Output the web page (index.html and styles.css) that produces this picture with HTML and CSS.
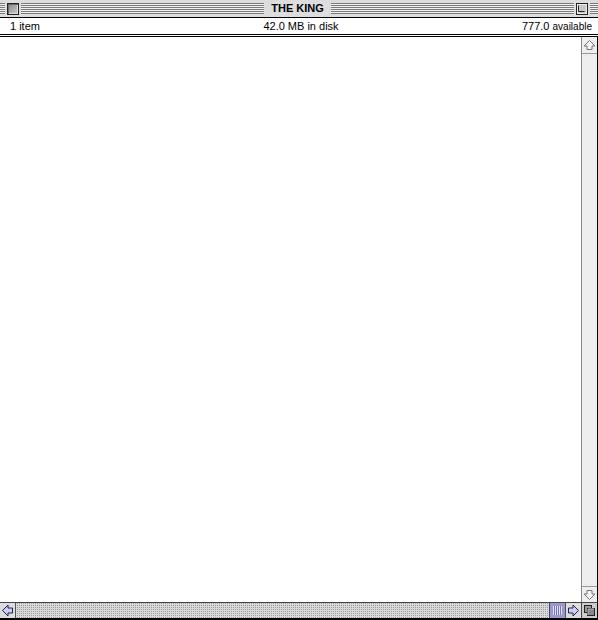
FILE: index.html
```html
<!DOCTYPE html>
<html>
<head>
<meta charset="utf-8">
<link rel="stylesheet" href="styles.css">
</head>
<body>
<div class="window">
  <div class="titlebar">
    <div class="stripe stripe-left"></div>
    <div class="box-slot"><div class="closebox"></div></div>
    <div class="stripe stripe-fill"></div>
    <div class="title">THE KING</div>
    <div class="stripe stripe-fill"></div>
    <div class="box-slot">
      <svg class="zoombox" width="12" height="12" viewBox="0 0 12 12">
        <rect x="0.5" y="0.5" width="11" height="11" fill="#aaa" stroke="#222"/>
        <rect x="1.5" y="1.5" width="9" height="9" fill="#c8c8c8" stroke="#eee"/>
        <path d="M2.5 2.5 V8.5 H8.5" fill="none" stroke="#222"/>
      </svg>
    </div>
    <div class="stripe stripe-right"></div>
  </div>
  <div class="info">
    <span class="info-left">1 item</span>
    <span class="info-mid">42.0 MB in disk</span>
    <span class="info-right">777.0 <span class="small">available</span></span>
  </div>
  <div class="sep"></div>
  <div class="main">
    <div class="content"></div>
    <div class="vscroll">
      <div class="varrow varrow-up">
        <svg width="15" height="16" viewBox="0 0 15 16">
          <path d="M7.5 3.5 L13 9 H10 V12.5 H5 V9 H2 Z" fill="#f4f4f4" stroke="#777"/>
        </svg>
      </div>
      <div class="vtrack"></div>
      <div class="varrow varrow-down">
        <svg width="15" height="15" viewBox="0 0 15 15">
          <path d="M7.5 12.5 L13 7 H10 V3.5 H5 V7 H2 Z" fill="#f4f4f4" stroke="#777"/>
        </svg>
      </div>
    </div>
  </div>
  <div class="hscroll">
    <div class="harrow harrow-left">
      <svg width="15" height="15" viewBox="0 0 15 15">
        <path d="M2.5 7.5 L8 2 V5 H12.5 V10 H8 V13 Z" fill="#ccccff" stroke="#222244"/>
      </svg>
    </div>
    <div class="htrack"></div>
    <div class="thumb"><div class="grip"></div></div>
    <div class="harrow harrow-right">
      <svg width="15" height="15" viewBox="0 0 15 15">
        <path d="M12.5 7.5 L7 2 V5 H2.5 V10 H7 V13 Z" fill="#ccccff" stroke="#222244"/>
      </svg>
    </div>
    <div class="growbox">
      <svg width="15" height="15" viewBox="0 0 15 15">
        <rect x="2.5" y="2.5" width="7" height="7" fill="#999" stroke="#222"/>
        <rect x="5.5" y="5.5" width="7" height="7" fill="#888" stroke="#222"/>
        <path d="M6 12 V6 H12" fill="none" stroke="#bbb"/>
      </svg>
    </div>
  </div>
</div>
</body>
</html>
```
FILE: styles.css
```css
html, body {
  margin: 0;
  padding: 0;
  background: #fff;
}

.window {
  width: 598px;
  height: 620px;
  display: flex;
  flex-direction: column;
  overflow: hidden;
  background: #fff;
}

.titlebar {
  height: 17px;
  flex: none;
  display: flex;
  align-items: stretch;
  background: #dddddd;
  border-bottom: 1px solid #000;
}

.stripe {
  background-color: #dddddd;
  background-image: repeating-linear-gradient(to bottom, #7a7a7a 0 1px, #f2f2f2 1px 2px);
  background-size: 100% 11px;
  background-position: 0 3px;
  background-repeat: no-repeat;
}

.stripe-left { width: 5px; }
.stripe-right { width: 8px; }
.stripe-fill { flex: 1; }

.box-slot {
  display: flex;
  align-items: center;
  padding: 0 2px;
}

.closebox {
  width: 10px;
  height: 10px;
  border: 1px solid #222;
  background: linear-gradient(135deg, #888 0%, #aaa 50%, #ccc 100%);
  box-shadow: inset 1px 1px 0 #666, inset -1px -1px 0 #ddd;
}

.zoombox {
  display: block;
}

.title {
  font-family: "Liberation Sans", Arial, sans-serif;
  font-weight: bold;
  font-size: 11px;
  line-height: 17px;
  color: #000;
  padding: 0 7px;
  background: #dddddd;
}

.info {
  height: 16px;
  flex: none;
  display: grid;
  grid-template-columns: 1fr auto 1fr;
  align-items: center;
  font-family: "Liberation Sans", Arial, sans-serif;
  font-size: 11px;
  color: #000;
  padding: 0 6px 0 10px;
}

.info-left { justify-self: start; }
.info-mid { justify-self: center; }
.info-right { justify-self: end; }
.small { font-size: 10px; }

.sep {
  height: 1px;
  flex: none;
  border-top: 1px solid #000;
  border-bottom: 1px solid #000;
  background: #fff;
}

.main {
  flex: 1;
  display: flex;
  min-height: 0;
}

.content {
  flex: 1;
  background: #fff;
}

.vscroll {
  width: 15px;
  flex: none;
  display: flex;
  flex-direction: column;
  background: #eeeeee;
  border-left: 1px solid #888;
  border-right: 1px solid #000;
}

.varrow {
  flex: none;
  display: flex;
  justify-content: center;
  align-items: center;
}

.varrow-up {
  height: 16px;
  border-bottom: 1px solid #999;
}

.varrow-down {
  height: 15px;
  border-top: 1px solid #999;
}

.vtrack { flex: 1; }

.hscroll {
  height: 15px;
  flex: none;
  display: flex;
  border-top: 1px solid #444;
  border-bottom: 2px solid #000;
  background: #dddddd;
}

.harrow {
  width: 15px;
  flex: none;
  display: flex;
  align-items: center;
  justify-content: center;
  background: #dddddd;
}

.harrow-left { border-right: 1px solid #555; }
.harrow-right { border-left: 1px solid #555; }

.htrack {
  flex: 1;
  background: repeating-conic-gradient(#9a9a9a 0 25%, #dadada 0 100%) 0 0 / 2px 2px;
}

.thumb {
  width: 15px;
  flex: none;
  display: flex;
  align-items: center;
  justify-content: center;
  background: #9999cc;
  border-left: 1px solid #444466;
}

.grip {
  width: 9px;
  height: 9px;
  background: repeating-linear-gradient(to right, #dde0ff 0 1px, #7777aa 1px 2px);
}

.growbox {
  width: 15px;
  flex: none;
  display: flex;
  align-items: center;
  justify-content: center;
  background: #cccccc;
  border-left: 1px solid #444;
  border-right: 1px solid #000;
}
```
